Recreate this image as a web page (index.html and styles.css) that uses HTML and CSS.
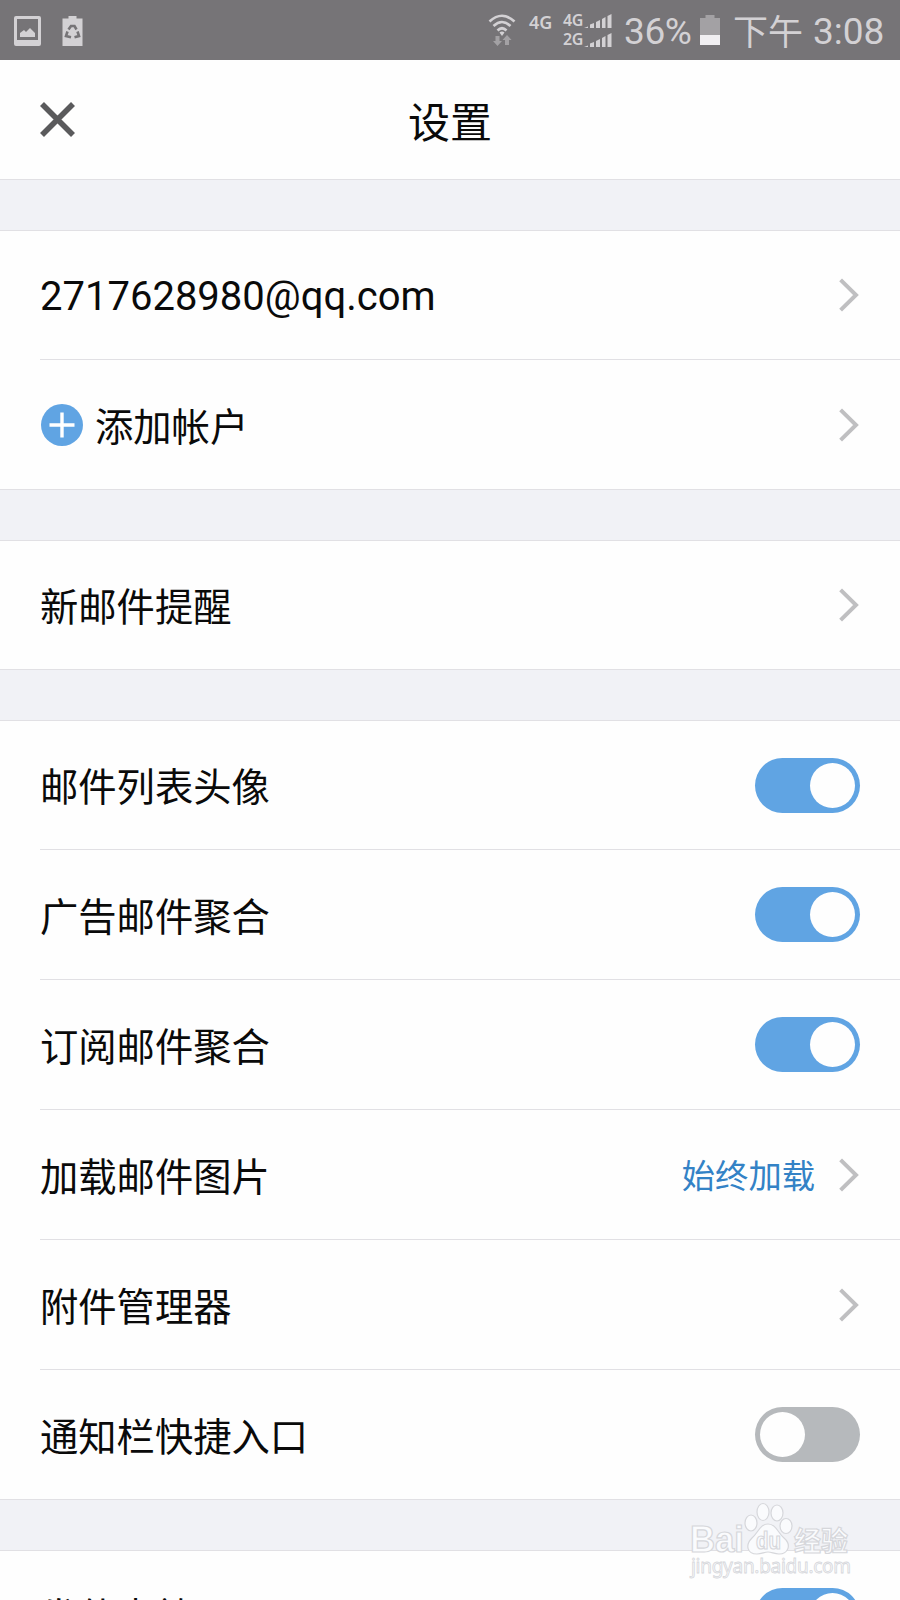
FILE: index.html
```
<!DOCTYPE html>
<html lang="zh-CN">
<head>
  <meta charset="UTF-8" />
  <meta name="viewport" content="width=device-width, initial-scale=1.0"/>
  <title>设置</title>
  <link rel="stylesheet" href="styles.css">
</head>
<body>
  <!-- Shared icons -->
  <svg class="defs" width="0" height="0">
    <symbol id="chevron" viewBox="0 0 20 34">
      <path d="M1.6 1.8 L17 17 L1.6 32.2" fill="none" stroke="#bfbfc1" stroke-width="4"/>
    </symbol>
  </svg>

  <!-- Status Bar -->
  <div class="status-bar">
    <svg class="status-left" width="84" height="60" viewBox="0 0 84 60">
      <path fill="#d3d1d4" fill-rule="evenodd" d="M16 16h23q2 0 2 2v26q0 2-2 2H16q-2 0-2-2V18q0-2 2-2zM17 19v21h21V19z"/>
      <path fill="#d3d1d4" d="M20 37v-4l4-3 2 2 4-4 5 5v4z"/>
      <path fill="#d3d1d4" d="M62.500 18.500h6V16h8v2.500h6V46h-20z"/>
      <g fill="none" stroke="#767477" stroke-width="2.600">
        <path d="M68.500 29.500l2.500-3.500h3.500l2 3.500"/>
        <path d="M77.500 31.500l1.500 4.500-4.500 1.200"/>
        <path d="M67.500 31.500l-1.500 4.500 5 1.200"/>
      </g>
    </svg>
    <div class="status-right">
      <svg class="wifi" width="28" height="32" viewBox="0 0 28 32">
        <g fill="none" stroke="#d3d1d4" stroke-width="2.600">
          <path d="M1.500 7.500Q14-4 26.500 7.500"/>
          <path d="M5.500 12Q14 4 22.500 12"/>
          <path d="M9.500 16.500Q14 12 18.500 16.500"/>
        </g>
        <path fill="#d3d1d4" d="M11.500 18.500Q14 16.500 16.500 18.500L14 22z"/>
        <path fill="#a3a1a4" d="M7.500 22h4v5h2.500l-4.500 5-4.500-5h2.500zM17 31v-5h-2.500l4.500-5 4.500 5H21v5z"/>
      </svg>
      <span class="net">4G</span>
      <div class="sims">
        <div class="sim"><span>4G</span>
          <svg width="28" height="14" viewBox="0 0 28 14"><path fill="#d3d1d4" d="M0 14l4-1.500V14zM6 14v-3.500l4-1.500v5zM12 14V8l4-2v8zM18 14V5l3.500-2v11zM23.500 14V2l4-2v14z"/></svg>
        </div>
        <div class="sim"><span>2G</span>
          <svg width="28" height="14" viewBox="0 0 28 14"><path fill="#d3d1d4" d="M0 14l4-1.500V14zM6 14v-3.500l4-1.500v5zM12 14V8l4-2v8zM18 14V5l3.500-2v11zM23.500 14V2l4-2v14z"/></svg>
        </div>
      </div>
      <span class="battery-text">36%</span>
      <svg class="battery" width="20" height="30" viewBox="0 0 20 30">
        <path fill="#a3a1a4" d="M0 3h5.500V0h9v3H20v17H0z"/>
        <path fill="#f1eff2" d="M0 20h20v10H0z"/>
      </svg>
      <span class="clock-label">下午</span>
      <span class="clock">3:08</span>
    </div>
  </div>

  <!-- Header -->
  <div class="header">
    <svg class="close" width="36" height="36" viewBox="0 0 36 36">
      <path d="M2 2L33 33M33 2L2 33" stroke="#5a5a5c" stroke-width="5.600"/>
    </svg>
    <div class="page-title">设置</div>
  </div>

  <!-- Accounts -->
  <div class="group">
    <div class="row">
      <span class="label email">2717628980@qq.com</span>
      <svg class="chevron"><use href="#chevron"/></svg>
    </div>
    <div class="row">
      <svg class="add" width="42" height="42" viewBox="0 0 42 42">
        <circle cx="21" cy="21" r="21" fill="#60a4e3"/>
        <path d="M8.500 21h25M21 8.500v25" stroke="#fff" stroke-width="3.400"/>
      </svg>
      <span class="label">添加帐户</span>
      <svg class="chevron"><use href="#chevron"/></svg>
    </div>
  </div>

  <!-- Notifications -->
  <div class="group">
    <div class="row">
      <span class="label">新邮件提醒</span>
      <svg class="chevron"><use href="#chevron"/></svg>
    </div>
  </div>

  <!-- Mail options -->
  <div class="group">
    <div class="row">
      <span class="label">邮件列表头像</span>
      <div class="switch on"><div class="knob"></div></div>
    </div>
    <div class="row">
      <span class="label">广告邮件聚合</span>
      <div class="switch on"><div class="knob"></div></div>
    </div>
    <div class="row">
      <span class="label">订阅邮件聚合</span>
      <div class="switch on"><div class="knob"></div></div>
    </div>
    <div class="row">
      <span class="label">加载邮件图片</span>
      <span class="value">始终加载</span>
      <svg class="chevron"><use href="#chevron"/></svg>
    </div>
    <div class="row">
      <span class="label">附件管理器</span>
      <svg class="chevron"><use href="#chevron"/></svg>
    </div>
    <div class="row">
      <span class="label">通知栏快捷入口</span>
      <div class="switch"><div class="knob"></div></div>
    </div>
  </div>

  <!-- Sounds -->
  <div class="group">
    <div class="row">
      <span class="label">发件声效</span>
      <div class="switch on"><div class="knob"></div></div>
    </div>
  </div>

  <!-- Watermark -->
  <svg class="watermark" width="180" height="90" viewBox="0 0 180 90">
    <g fill="#fafbfd" stroke="#d6d7db" stroke-width="1.200">
      <text class="wm-brand" x="10" y="57" textLength="54" lengthAdjust="spacingAndGlyphs">Bai</text>
      <ellipse cx="71" cy="28" rx="6" ry="8"/>
      <ellipse cx="83" cy="17" rx="6" ry="8.500"/>
      <ellipse cx="97" cy="18" rx="6" ry="8"/>
      <ellipse cx="106" cy="31" rx="6" ry="7.500"/>
      <path d="M88 29C96 29 98 38 104 43C112 50 108 59 99 59C94 59 92 57 88 57C84 57 82 59 77 59C67 59 65 50 72 43C78 38 80 29 88 29z"/>
      <text class="wm-du" x="76" y="54" textLength="25" lengthAdjust="spacingAndGlyphs">du</text>
      <text class="wm-cn" x="114" y="56" textLength="54">经验</text>
      <text class="wm-url" x="11" y="78" textLength="160">jingyan.baidu.com</text>
    </g>
  </svg>
</body>
</html>
```
FILE: styles.css
```
/* Reset */
* {
  margin: 0;
  padding: 0;
  box-sizing: border-box;
}
html {
  height: 1600px;
  overflow: hidden;
}
body {
  width: 900px;
  height: 1600px;
  overflow: hidden;
  position: relative;
  background: #f1f2f6;
  font-family: Roboto, "Noto Sans CJK SC", sans-serif;
  color: #0a0a0a;
}
svg {
  display: block;
  flex-shrink: 0;
}
.defs {
  position: absolute;
}

/* Status bar */
.status-bar {
  display: flex;
  justify-content: space-between;
  height: 60px;
  padding-right: 16px;
  background: #767477;
  color: #d3d1d4;
}
.status-right {
  display: flex;
  align-items: center;
}
.wifi {
  margin-right: 13px;
}
.net,
.sim {
  font-family: "Noto Sans", sans-serif;
  font-weight: 600;
  font-size: 18px;
}
.net {
  width: 34px;
  margin-bottom: 16px;
}
.sims {
  width: 61px;
}
.sim {
  display: flex;
  align-items: center;
  height: 19px;
  line-height: 19px;
}
.sim span {
  width: 21px;
  font-size: 16px;
  letter-spacing: -0.3px;
}
.battery-text,
.clock {
  padding-top: 4px;
  font-size: 37px;
  line-height: 44px;
}
.battery-text {
  width: 76px;
  letter-spacing: -0.4px;
}
.battery {
  margin-right: 13px;
}
.clock-label {
  width: 80px;
  padding-top: 8px;
  font-size: 35px;
  line-height: 50px;
}
.clock {
  width: 71px;
}

/* Header */
.header {
  display: grid;
  grid-template-columns: 1fr auto 1fr;
  align-items: center;
  height: 120px;
  padding: 0 40px;
  background: #fefefe;
  border-bottom: 1px solid #e1e0e4;
}
.page-title {
  padding-top: 8px;
  font-size: 42px;
  line-height: 60px;
}

/* Setting groups */
.group {
  margin-bottom: 50px;
  padding-left: 40px;
  background: #fefefe;
  border-top: 1px solid #e1e0e4;
}
.header + .group {
  margin-top: 50px;
}
.row {
  display: flex;
  align-items: center;
  height: 130px;
  padding-right: 40px;
  border-bottom: 1px solid #e1e0e4;
}
.row:first-child {
  height: 129px;
}
.row:last-child {
  margin-left: -40px;
  padding-left: 40px;
}
.label {
  flex: 1;
  padding-top: 6px;
  font-size: 38.3px;
  line-height: 56px;
}
.email {
  padding-top: 4px;
  font-size: 40px;
}
.value {
  margin-right: 24px;
  padding-top: 5px;
  font-size: 33.3px;
  line-height: 48px;
  color: #3382c6;
}
.chevron {
  width: 20px;
  height: 34px;
  margin-right: 1px;
}
.add {
  margin: 0 12px 0 1px;
}

/* Switch */
.switch {
  display: flex;
  align-items: center;
  width: 105px;
  height: 55px;
  padding: 0 5px;
  border-radius: 28px;
  background: #b6b9bc;
}
.switch.on {
  justify-content: flex-end;
  background: #60a4e3;
}
.knob {
  width: 45px;
  height: 45px;
  border-radius: 50%;
  background: #fefefe;
}

/* Watermark */
.watermark {
  position: absolute;
  left: 680px;
  top: 1495px;
}
.watermark text {
  font-family: "Liberation Sans", "Noto Sans CJK SC", sans-serif;
  font-weight: 700;
}
.wm-brand {
  font-size: 36px;
}
.wm-du {
  font-size: 23px;
}
.watermark .wm-cn {
  font-size: 27px;
}
.watermark .wm-url {
  font-family: "Noto Sans", sans-serif;
  font-weight: 400;
  font-size: 19px;
  stroke-width: 0.8px;
}
```
